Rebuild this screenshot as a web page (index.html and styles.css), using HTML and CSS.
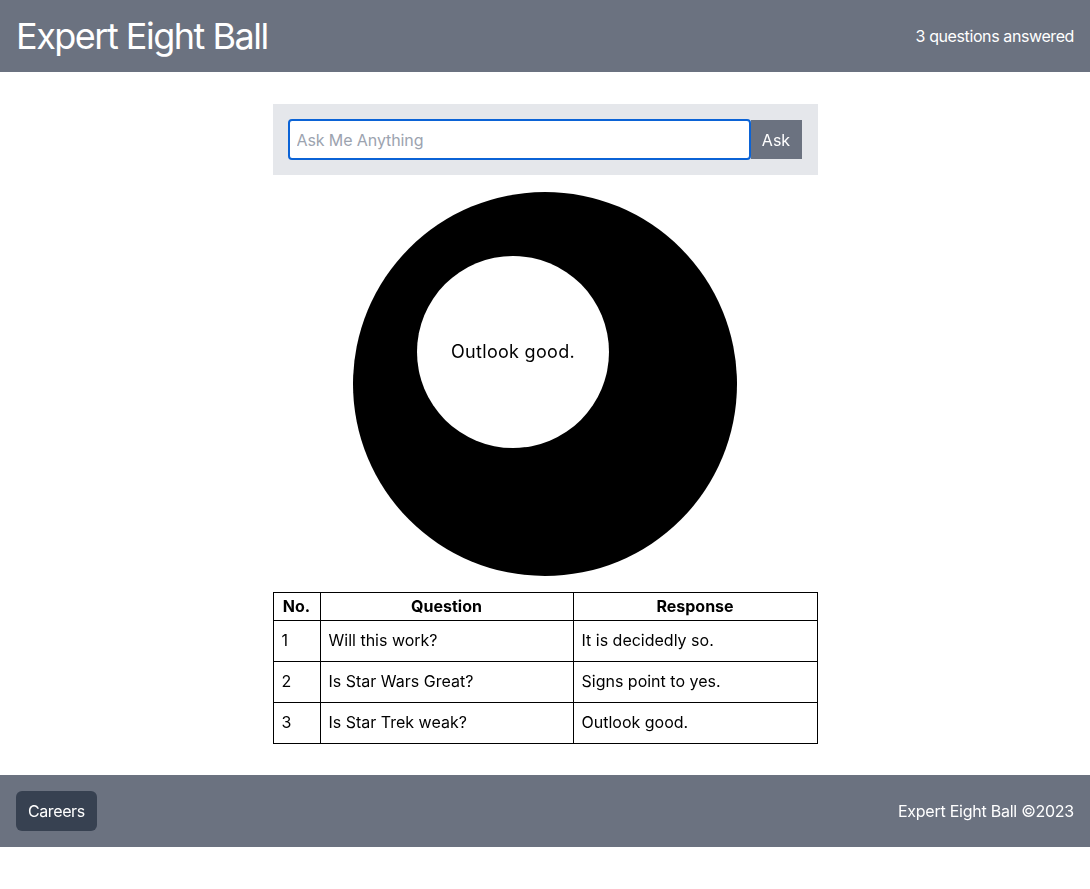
FILE: index.html
```html
<!DOCTYPE html>
<html lang="en">
<head>
<meta charset="utf-8">
<title>Expert Eight Ball</title>
<link rel="stylesheet" href="styles.css">
</head>
<body>
<header class="topbar">
  <h1 class="brand">Expert Eight Ball</h1>
  <span class="count">3 questions answered</span>
</header>
<main class="main">
  <div class="content">
    <form class="ask-panel">
      <input class="ask-input" type="text" placeholder="Ask Me Anything" autofocus>
      <button class="ask-btn" type="button">Ask</button>
    </form>
    <div class="ball">
      <div class="window">Outlook good.</div>
    </div>
    <table class="history">
      <thead>
        <tr><th class="c-no">No.</th><th class="c-q">Question</th><th class="c-r">Response</th></tr>
      </thead>
      <tbody>
        <tr><td>1</td><td>Will this work?</td><td>It is decidedly so.</td></tr>
        <tr><td>2</td><td>Is Star Wars Great?</td><td>Signs point to yes.</td></tr>
        <tr><td>3</td><td>Is Star Trek weak?</td><td>Outlook good.</td></tr>
      </tbody>
    </table>
  </div>
</main>
<footer class="footbar">
  <button class="careers" type="button">Careers</button>
  <span class="copy">Expert Eight Ball ©2023</span>
</footer>
</body>
</html>
```
FILE: styles.css
```css
* { box-sizing: border-box; }
html, body { margin: 0; padding: 0; }
body {
  font-family: Inter, "Noto Sans", "Liberation Sans", sans-serif;
  font-size: 16px;
  line-height: 24px;
  color: #000;
  background: #fff;
}
.topbar {
  height: 72px;
  background: #6b7280;
  color: #fff;
  display: flex;
  align-items: center;
  justify-content: space-between;
  padding: 0 16px;
}
.brand {
  margin: 0;
  font-size: 36px;
  line-height: 40px;
  font-weight: 400;
  letter-spacing: -1.5px;
}
.count { font-size: 16px; letter-spacing: -0.4px; }
.main {
  padding: 32px 0 31px;
}
.content {
  width: 545px;
  margin: 0 auto;
  display: flex;
  flex-direction: column;
  align-items: center;
  gap: 16px;
}
.ask-panel {
  width: 100%;
  background: #e5e7eb;
  padding: 15px 16px 15px 15px;
  display: flex;
  align-items: center;
  margin: 0 0 1px;
}
.ask-input {
  flex: 1;
  height: 41px;
  border: 2px solid #0b63d6;
  border-radius: 4px;
  padding: 0 7px;
  font: inherit;
  font-size: 16px;
  color: #111;
  outline: none;
  background: #fff;
}
.ask-input::placeholder { color: #9ca3af; letter-spacing: -0.1px; }
.ask-btn {
  width: 51px;
  height: 39px;
  border: 0;
  background: #6b7280;
  color: #fff;
  font: inherit;
  font-size: 16px;
  padding: 0;
}
.ball {
  width: 384px;
  height: 384px;
  border-radius: 50%;
  background: #000;
  padding: 64px;
}
.window {
  width: 192px;
  height: 192px;
  border-radius: 50%;
  background: #fff;
  display: flex;
  align-items: center;
  justify-content: center;
  font-size: 18px;
  letter-spacing: 0.3px;
  padding-bottom: 1px;
}
.history {
  width: 545px;
  border-collapse: collapse;
}
.history th, .history td {
  border: 1px solid #000;
  text-align: left;
}
.history th {
  text-align: center;
  font-weight: 700;
  padding: 1px 8px 2px;
  font-size: 16px;
}
.history td {
  padding: 7px 8px 9px;
  font-size: 16px;
}
.c-no { width: 47px; }
.c-q { width: 253px; }
.footbar {
  height: 72px;
  background: #6b7280;
  color: #fff;
  display: flex;
  align-items: center;
  justify-content: space-between;
  padding: 0 16px;
}
.careers {
  background: #374151;
  color: #fff;
  border: 0;
  border-radius: 6px;
  height: 40px;
  padding: 0 12px;
  font: inherit;
  font-size: 16px;
  letter-spacing: -0.4px;
}
.copy { font-size: 16px; letter-spacing: -0.25px; }
```
